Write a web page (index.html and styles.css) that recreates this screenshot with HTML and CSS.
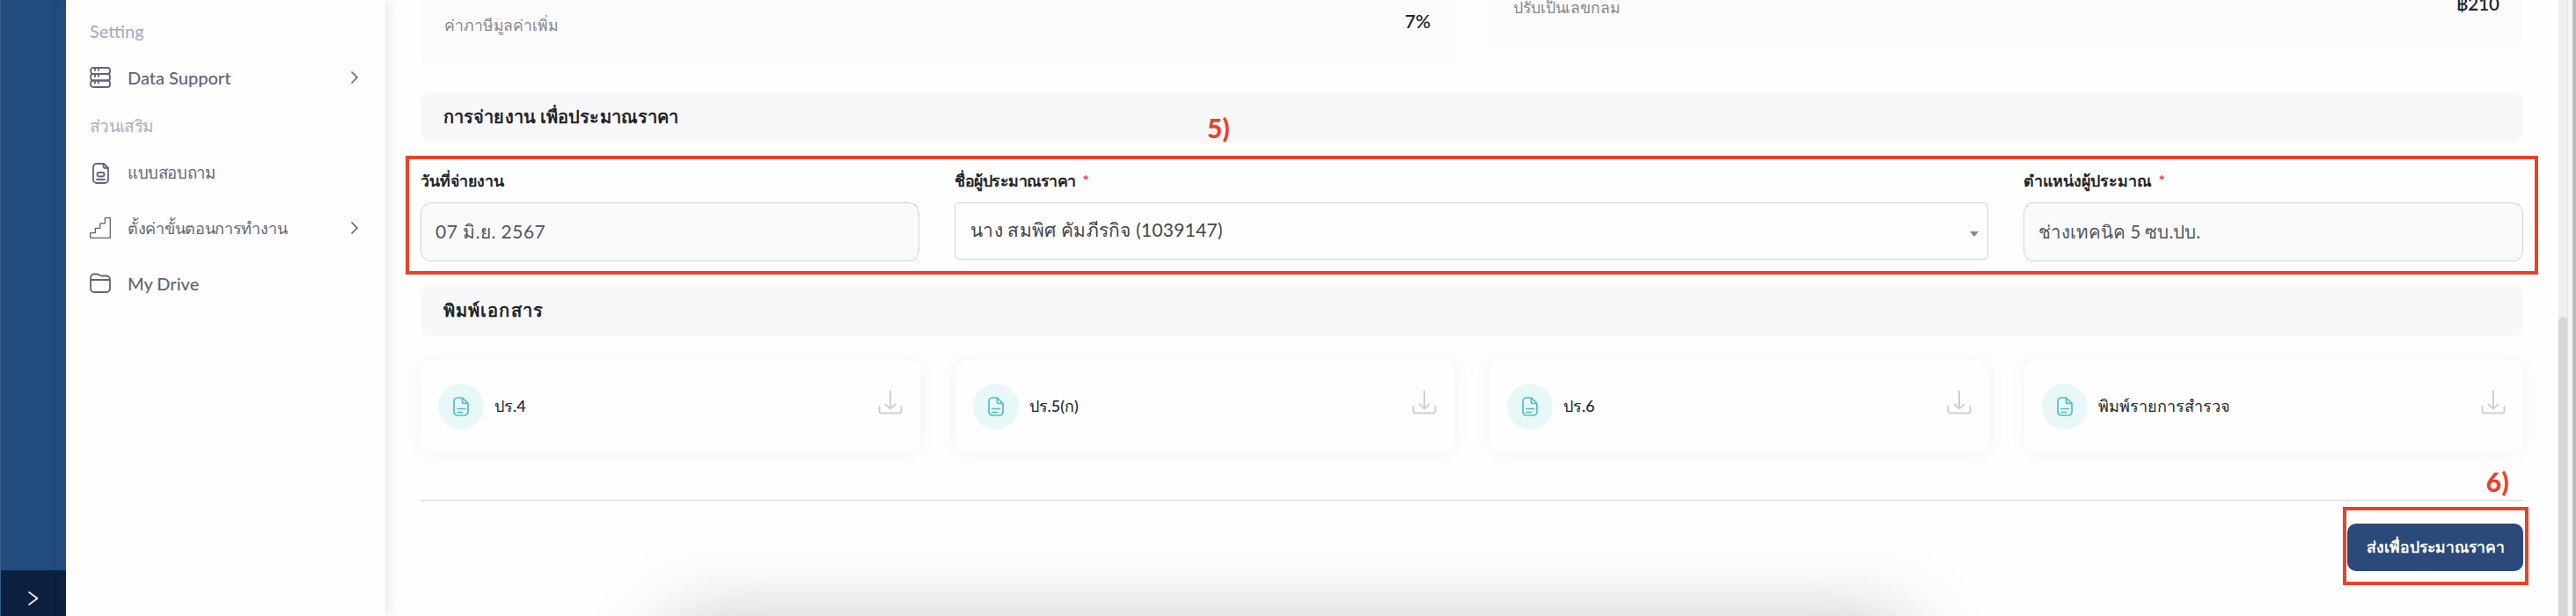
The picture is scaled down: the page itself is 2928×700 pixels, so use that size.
FILE: index.html
```html
<!DOCTYPE html>
<html lang="th">
<head>
<meta charset="utf-8">
<title>การจ่ายงาน เพื่อประมาณราคา</title>
<link rel="stylesheet" href="styles.css">
</head>
<body>
<svg class="defs" aria-hidden="true">
  <symbol id="doc" viewBox="0 0 20 24"><path d="M6 2h5.500L18 8.500V18a4 4 0 0 1-4 4H6a4 4 0 0 1-4-4V6a4 4 0 0 1 4-4zM11.500 2v4.500a2 2 0 0 0 2 2H18M6 14.500h8.500M6 18.500h5.500"/></symbol>
  <symbol id="download" viewBox="0 0 28 28"><path d="M14 1.500V21M8.500 16.500l5.500 5 5.500-5M1.500 19v5a2.500 2.500 0 0 0 2.500 2.500h20a2.500 2.500 0 0 0 2.500-2.500v-5"/></symbol>
  <symbol id="chevron" viewBox="0 0 8 14"><path d="M1 1l6 6-6 6"/></symbol>
</svg>
<div class="app">
  <aside class="rail">
    <button class="rail-toggle" aria-label="ขยายเมนู"><svg viewBox="0 0 12 16"><path d="M1 1l9.500 7L1 15"/></svg></button>
  </aside>
  <nav class="sidebar">
    <div class="nav-title">Setting</div>
    <a class="nav-item">
      <svg class="nav-icon" viewBox="0 0 24 24"><rect x="1" y="1" width="22" height="7" rx="3"/><rect x="1" y="8" width="22" height="7.500" rx="3"/><rect x="1" y="15.500" width="22" height="7.500" rx="3"/><path d="M6 2v2M10 2v2M6 9v2M10 9v2M6 16.500v2M10 16.500v2"/></svg>
      <span>Data Support</span><svg class="nav-arrow"><use href="#chevron"/></svg>
    </a>
    <div class="nav-title second">ส่วนเสริม</div>
    <a class="nav-item">
      <svg class="nav-icon" viewBox="0 0 24 24"><path d="M8 1h8l5 5v13a4 4 0 0 1-4 4H8a4 4 0 0 1-4-4V5a4 4 0 0 1 4-4zM15.500 1v3a2 2 0 0 0 2 2H21M8 19h9"/><rect x="8.500" y="11" width="8" height="4.500" rx="2.250"/></svg>
      <span class="t-survey">แบบสอบถาม</span>
    </a>
    <a class="nav-item">
      <svg class="nav-icon thin" viewBox="0 0 24 24"><path d="M.7 23.300v-5.600h5.600v-5.400h5.500V6.900h5.500V.7h6v22.600z"/></svg>
      <span class="t-steps">ตั้งค่าขั้นตอนการทำงาน</span><svg class="nav-arrow"><use href="#chevron"/></svg>
    </a>
    <a class="nav-item">
      <svg class="nav-icon" viewBox="0 0 24 24"><path d="M1 8V5.500a4 4 0 0 1 4-4h3c2.500 0 3 2 5.500 2H19a4 4 0 0 1 4 4V18a4 4 0 0 1-4 4H5a4 4 0 0 1-4-4zM1 8h22"/></svg>
      <span>My Drive</span>
    </a>
  </nav>
  <main class="content">
    <div class="totals">
      <div class="total total-vat"><span class="total-name">ค่าภาษีมูลค่าเพิ่ม</span><b class="total-value">7%</b></div>
      <div class="total total-round"><span class="total-name">ปรับเป็นเลขกลม</span><b class="total-value">฿210</b></div>
    </div>
    <h2 class="section">การจ่ายงาน เพื่อประมาณราคา<span class="note note-5">5)</span></h2>
    <form class="fields">
      <div class="field"><label class="label">วันที่จ่ายงาน</label><div class="input">07 มิ.ย. 2567</div></div>
      <div class="field wide"><label class="label t-estimator">ชื่อผู้ประมาณราคา <i>*</i></label><div class="input select">นาง สมพิศ คัมภีรกิจ (1039147)<span class="caret"></span></div></div>
      <div class="field"><label class="label">ตำแหน่งผู้ประมาณ <i>*</i></label><div class="input t-position">ช่างเทคนิค 5 ซบ.ปบ.</div></div>
      <div class="frame frame-fields"></div>
    </form>
    <h2 class="section t-print">พิมพ์เอกสาร</h2>
    <div class="cards">
      <div class="card"><span class="badge"><svg><use href="#doc"/></svg></span><span class="card-name">ปร.4</span><svg class="dl"><use href="#download"/></svg></div>
      <div class="card"><span class="badge"><svg><use href="#doc"/></svg></span><span class="card-name">ปร.5(ก)</span><svg class="dl"><use href="#download"/></svg></div>
      <div class="card"><span class="badge"><svg><use href="#doc"/></svg></span><span class="card-name">ปร.6</span><svg class="dl"><use href="#download"/></svg></div>
      <div class="card"><span class="badge"><svg><use href="#doc"/></svg></span><span class="card-name">พิมพ์รายการสำรวจ</span><svg class="dl"><use href="#download"/></svg></div>
    </div>
    <div class="actions">
      <button class="submit">ส่งเพื่อประมาณราคา<span class="frame frame-submit"></span></button>
      <span class="note note-6">6)</span>
    </div>
  </main>
  <div class="scroll"><div class="thumb"></div></div>
  <div class="edge"></div>
  <div class="glow"></div>
</div>
</body>
</html>
```
FILE: styles.css
```css
* { box-sizing: border-box; }
body { margin: 0; background: #fefefe; color: #212529; font-family: Lato, "Noto Sans", sans-serif; font-size: 20px; }
.defs { position: absolute; width: 0; height: 0; }
svg { fill: none; stroke: currentColor; stroke-linecap: round; stroke-linejoin: round; }
.app { position: relative; display: flex; height: 700px; overflow: hidden; }

.rail { width: 75px; background: #234c7e; border-left: 1px solid #3a5f8c; display: flex; flex-direction: column; justify-content: flex-end; }
.rail-toggle { height: 52px; border: 0; padding: 12px 0 0; background: #0c213f; color: #fff; display: grid; place-items: center; }
.rail-toggle svg { width: 12px; height: 16px; stroke-width: 1.6; }

.sidebar { width: 363px; padding: 17px 31px 0 27px; background: #fefefe; color: #636378; font-weight: 500; box-shadow: 2px 0 16px rgba(70, 85, 115, .15); display: flex; flex-direction: column; }
.nav-title { height: 36px; line-height: 36px; color: #acacc0; }
.nav-title.second { margin: 5px 0 5px; font-size: 19px; letter-spacing: -.7px; }
.nav-item { height: 62.500px; display: flex; align-items: center; }
.nav-title + .nav-item { margin-top: 4px; }
.nav-title.second + .nav-item { margin-top: 0; }
.nav-icon { width: 24px; height: 24px; margin-right: 19px; stroke-width: 1.800; }
.nav-icon.thin { stroke-width: 1.300; }
.nav-arrow { width: 8px; height: 14px; margin-left: auto; stroke-width: 1.700; }
.t-survey { font-size: 18.500px; letter-spacing: -.4px; }
.t-steps { font-size: 18px; letter-spacing: -.3px; }

.content { width: 2470px; padding: 0 40px; display: flex; flex-direction: column; }
.totals { display: grid; grid-template-columns: 1fr 1fr; column-gap: 40px; align-items: start; height: 104px; }
.total { display: flex; justify-content: space-between; padding: 0 27px; background: #fcfcfc; border-radius: 0 0 12px 12px; }
.total-vat { height: 77px; padding-top: 11px; }
.total-round { height: 57px; padding-top: 0; }
.total-name { color: #85858f; font-size: 17.600px; line-height: 36px; letter-spacing: -.1px; }
.total-value { font-weight: 600; font-size: 21px; line-height: 26px; }
.total-round .total-name { margin-top: -9px; }
.total-round .total-value { margin-top: -9px; font-size: 20.500px; }
.section { position: relative; margin: 0; height: 58px; padding: 0 26px; line-height: 56px; background: #f8f8fa; border-radius: 12px; font-size: 20px; font-weight: 600; letter-spacing: .1px; }
.t-print { letter-spacing: 1.1px; }
.fields { position: relative; display: grid; grid-template-columns: 567px 1175px 568px; column-gap: 40px; height: 162px; padding-top: 28px; }
.label { display: block; height: 40px; line-height: 30px; font-size: 17.800px; font-weight: 600; }
.label i { margin-left: 4px; color: #ee3b2d; font-style: normal; }
.t-estimator { letter-spacing: -.5px; }
.input { height: 67px; padding: 0 16px; line-height: 64px; border: 1px solid #ced4da; border-radius: 12px; background: #fafafa; color: #50565d; font-size: 21px; letter-spacing: .45px; }
.input.select { position: relative; height: 65px; line-height: 60px; padding-left: 17px; border-radius: 5px; background: #fefefe; color: #444; letter-spacing: .25px; }
.input.t-position { font-size: 20.500px; letter-spacing: 0; }
.caret { position: absolute; right: 10px; top: 32px; border: 5px solid transparent; border-top: 6px solid #888; border-bottom: 0; }

.cards { display: grid; grid-template-columns: repeat(4, 1fr); column-gap: 40px; padding: 27px 0 54px; border-bottom: 1px solid #d8d8da; }
.card { height: 105px; padding: 0 20px; display: flex; align-items: center; border-radius: 12px; background: #fefefe; box-shadow: 0 0 20px rgba(0, 0, 0, .05); }
.badge { width: 52px; height: 52px; margin: 1px 12px 0 0; border-radius: 50%; background: #e8f8f8; color: #50bec0; display: grid; place-items: center; }
.badge svg { width: 20px; height: 24px; stroke-width: 1.700; }
.card-name { font-size: 18px; font-weight: 500; }
.dl { width: 28px; height: 28px; margin: -9px 0 0 auto; color: #cfcfd4; stroke-width: 2; }

.actions { position: relative; display: flex; justify-content: flex-end; padding-top: 26px; }
.submit { position: relative; width: 200px; height: 54px; padding: 0; border: 0; border-radius: 10px; background: #2b4a7a; color: #fff; font: 600 17.600px Lato, "Noto Sans", sans-serif; }

.frame { position: absolute; border: 4px solid #ec4127; pointer-events: none; }
.frame-fields { left: -17px; right: -17px; top: 15px; height: 135px; }
.frame-submit { left: -5px; right: -6px; top: -19px; height: 89px; }
.note { position: absolute; color: #ec4127; font-size: 30px; font-weight: 900; line-height: 36px; letter-spacing: .2px; }
.note-5 { left: 894px; top: 23px; }
.note-6 { right: 16px; top: -40px; }

.scroll { width: 11px; padding-top: 360px; background: #f0f0f0; border-right: 1px solid #e4e4e4; }
.thumb { height: 100%; border-radius: 5px 5px 0 0; background: #d6d6d6; }
.edge { flex: 1; background: #f7f7f7; border-right: 4px solid #bbb; }
.glow { position: absolute; left: 765px; top: 712px; width: 1400px; height: 200px; box-shadow: 0 0 96px rgba(0, 0, 0, .26); pointer-events: none; }
```
